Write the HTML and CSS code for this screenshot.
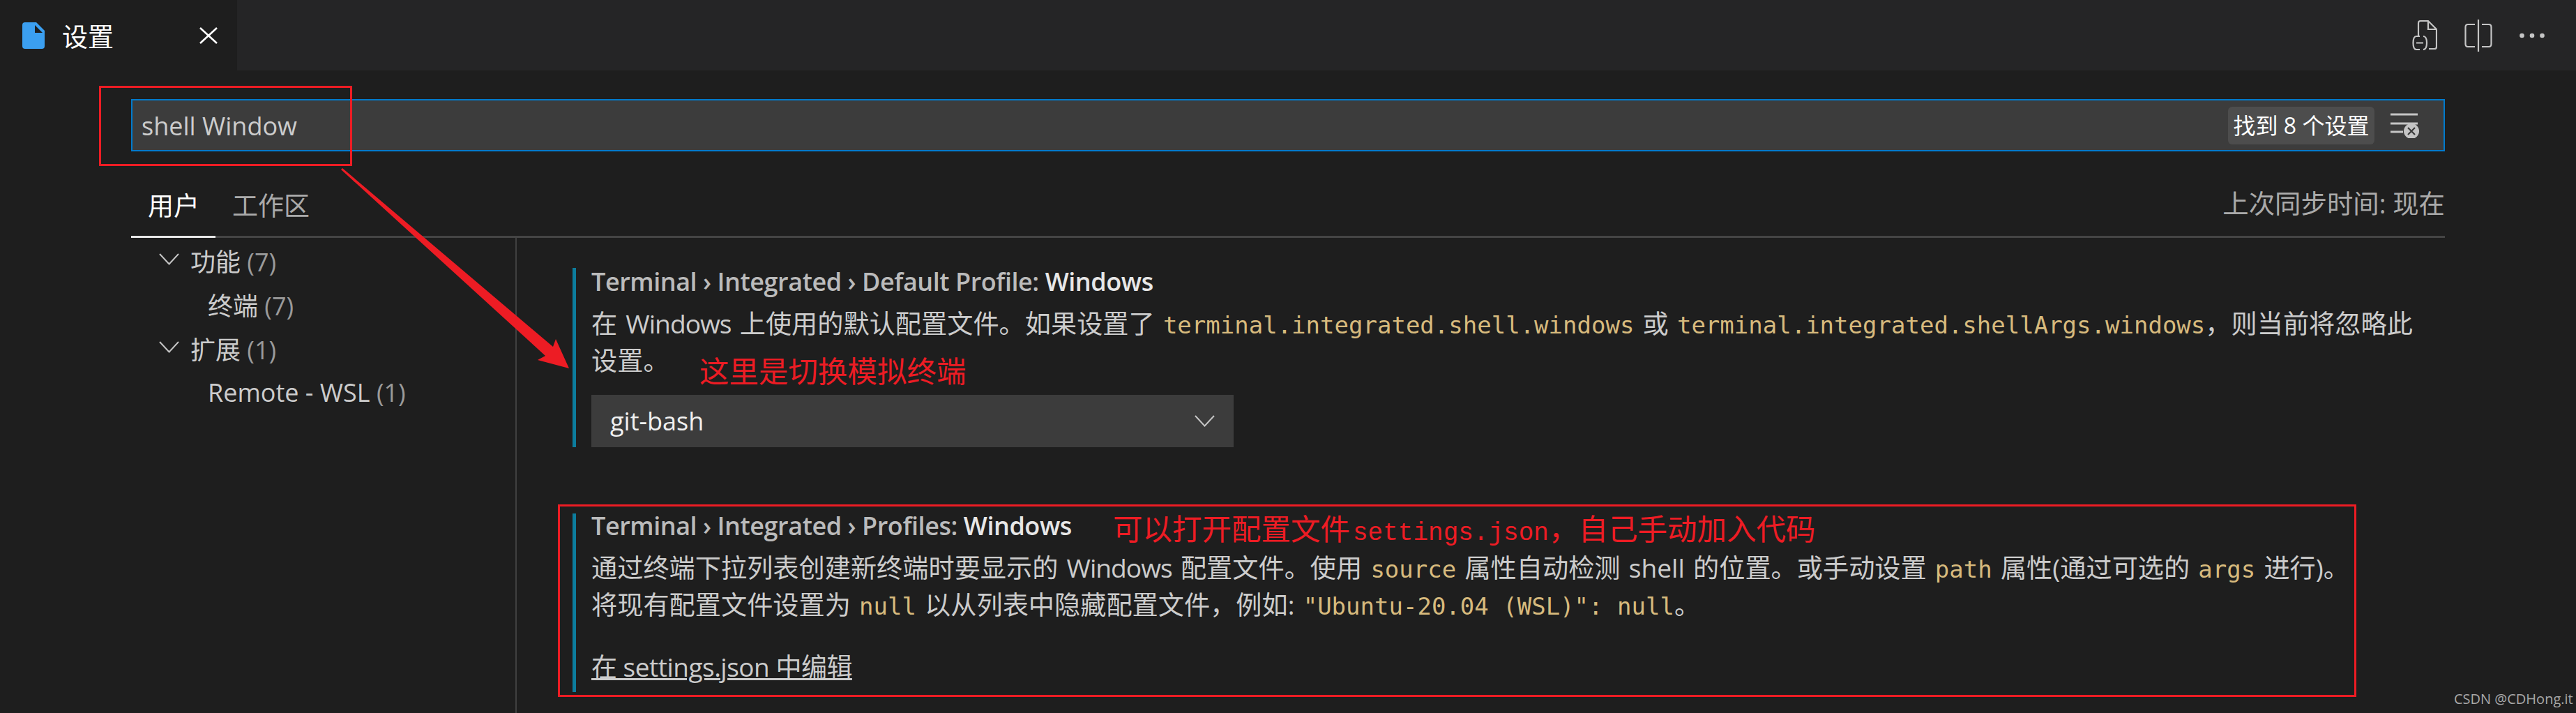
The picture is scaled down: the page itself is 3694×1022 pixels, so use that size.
FILE: index.html
```html
<!DOCTYPE html>
<html lang="zh-CN">
<head>
<meta charset="utf-8">
<title>设置</title>
<link rel="stylesheet" href="styles.css">
</head>
<body>
<div class="editor">
  <header class="tabbar">
    <div class="tab">
      <svg class="file-icon" viewBox="0 0 32 38"><path d="M4 0H20L32 12V34Q32 38 28 38H4Q0 38 0 34V4Q0 0 4 0Z" fill="#3b9ff0"/><path d="M18 4L29 15H18Z" fill="#1e1e1e"/></svg>
      <span class="tab-label">设置</span>
      <svg class="tab-close" viewBox="0 0 26 24"><path d="M1 1L25 23M25 1L1 23" stroke="#fff" stroke-width="2.6" fill="none"/></svg>
    </div>
    <div class="actions">
      <svg class="act-file" viewBox="0 0 36 46" fill="none" stroke="#c5c5c5" stroke-width="2.2"><path d="M9 24V5Q9 2 12 2H23L35 14V39Q35 42 32 42H24"/><path d="M23 2V14H35"/><path d="M11 24H6Q1.500 24 1.500 33.500T6 43H11M16 24Q21 24 21 33.500T16 43M6 33.500H16"/></svg>
      <svg class="act-split" viewBox="0 0 40 46" fill="none" stroke="#c5c5c5" stroke-width="2.2"><path d="M20 0V46"/><path d="M15 7H5Q1.500 7 1.500 11V35Q1.500 39 5 39H15M25 7H35Q38.500 7 38.500 11V35Q38.500 39 35 39H25"/></svg>
      <svg class="act-more" viewBox="0 0 36 8" fill="#c5c5c5"><circle cx="3.500" cy="4" r="3.300"/><circle cx="18" cy="4" r="3.300"/><circle cx="32.500" cy="4" r="3.300"/></svg>
    </div>
  </header>

  <div class="search">
    <span class="search-text">shell Window</span>
    <span class="badge">找到 8 个设置</span>
    <svg class="clear-icon" viewBox="0 0 41 36"><path d="M0 2H39M0 15H39M0 27H18" stroke="#c5c5c5" stroke-width="3" fill="none"/><ellipse cx="30" cy="26" rx="11" ry="11" fill="#c5c5c5"/><path d="M25 21L35 31M35 21L25 31" stroke="#3c3c3c" stroke-width="2.200" fill="none"/></svg>
  </div>

  <nav class="scopes">
    <span class="scope scope-active">用户</span>
    <span class="scope">工作区</span>
    <span class="sync">上次同步时间: 现在</span>
  </nav>

  <div class="body">
    <aside class="tree">
      <div class="row"><svg class="chev" viewBox="0 0 29 17"><path d="M1 1L14.500 15.500L28 1" fill="none" stroke="#c5c5c5" stroke-width="2"/></svg><span class="node">功能 <i class="count">(7)</i></span></div>
      <div class="row row-sub"><span class="node">终端 <i class="count">(7)</i></span></div>
      <div class="row"><svg class="chev" viewBox="0 0 29 17"><path d="M1 1L14.500 15.500L28 1" fill="none" stroke="#c5c5c5" stroke-width="2"/></svg><span class="node">扩展 <i class="count">(1)</i></span></div>
      <div class="row row-sub"><span class="node">Remote - WSL <i class="count">(1)</i></span></div>
    </aside>
    <main class="settings">
      <section class="setting setting-one">
        <h2 class="title">Terminal › Integrated › Default Profile: <b>Windows</b></h2>
        <div class="desc">
          <div class="line">在 <span class="word">Windows</span> 上使用的默认配置文件。如果设置了 <code>terminal.integrated.shell.windows</code> 或 <code>terminal.integrated.shellArgs.windows</code>，则当前将忽略此</div>
          <div class="line">设置。</div>
        </div>
        <div class="select"><span>git-bash</span><svg class="select-chev" viewBox="0 0 29 17"><path d="M1 1L14.500 15.500L28 1" fill="none" stroke="#c5c5c5" stroke-width="2"/></svg></div>
      </section>
      <section class="setting setting-two">
        <h2 class="title">Terminal › Integrated › Profiles: <b>Windows</b></h2>
        <div class="desc">
          <div class="line">通过终端下拉列表创建新终端时要显示的 <span class="word">Windows</span> 配置文件。使用 <code>source</code> 属性自动检测 shell 的位置。或手动设置 <code>path</code> 属性(通过可选的 <code>args</code> 进行)。</div>
          <div class="line">将现有配置文件设置为 <code>null</code> 以从列表中隐藏配置文件，例如: <code>"Ubuntu-20.04 (WSL)": null</code>。</div>
        </div>
        <a class="link">在 settings.json 中编辑</a>
      </section>
    </main>
  </div>

  <div class="mark mark-search"></div>
  <div class="mark mark-profiles"></div>
  <svg class="arrow" viewBox="0 0 3694 1022"><polygon points="489,243 491,241 793,497 797,486 816,528 771,516 782,510" fill="#ed1c24"/></svg>
  <span class="note note-one">这里是切换模拟终端</span>
  <span class="note note-two">可以打开配置文件<span class="note-mono">settings.json</span>，自己手动加入代码</span>
  <span class="watermark">CSDN @CDHong.it</span>
</div>
</body>
</html>
```
FILE: styles.css
```css
* { box-sizing: border-box; }
html, body { margin: 0; padding: 0; background: #1e1e1e; }
.editor {
  position: relative;
  width: 3694px;
  height: 1022px;
  overflow: hidden;
  display: flex;
  flex-direction: column;
  color: #cccccc;
  font-family: "Open Sans", "Noto Sans CJK SC", sans-serif;
  font-size: 36px;
}
.tabbar {
  flex: none;
  height: 101px;
  background: #252526;
  display: flex;
  justify-content: space-between;
}
.tab {
  width: 340px;
  background: #1e1e1e;
  display: flex;
  align-items: center;
  padding-left: 32px;
  color: #fff;
}
.file-icon { width: 32px; height: 38px; margin-right: 25px; }
.tab-label { font-size: 37px; width: 197px; }
.tab-close { width: 26px; height: 24px; }
.actions { display: flex; align-items: center; padding-right: 45px; }
.act-file { width: 36px; height: 46px; }
.act-split { width: 40px; height: 46px; margin-left: 39px; }
.act-more { width: 36px; height: 8px; margin-left: 39px; }
.search {
  flex: none;
  margin: 41px 0 0 188px;
  width: 3318px;
  height: 75px;
  background: #3c3c3c;
  border: 2px solid #007acc;
  display: flex;
  align-items: center;
  padding: 0 35px 0 13px;
}
.search-text { flex: 1; font-size: 36px; color: #cccccc; position: relative; top: 1px; }
.badge {
  width: 210px;
  height: 54px;
  background: #4d4d4d;
  border-radius: 6px;
  color: #fff;
  font-size: 32px;
  line-height: 54px;
  text-align: center;
  white-space: nowrap;
}
.clear-icon { width: 41px; height: 36px; margin-left: 23px; }
.scopes {
  flex: none;
  height: 124px;
  margin: 0 0 0 188px;
  width: 3318px;
  border-bottom: 3px solid #454545;
  display: flex;
  align-items: flex-end;
}
.scope {
  font-size: 37px;
  color: #aaaaaa;
  height: 74px;
  padding: 0 23px 0 24px;
  line-height: 56px;
  margin-bottom: -3px;
  border-bottom: 3px solid transparent;
}
.scope-active { color: #fff; border-bottom-color: #e7e7e7; }
.sync {
  margin-left: auto;
  height: 74px;
  line-height: 56px;
  font-size: 37.400px;
  color: #aaaaaa;
  white-space: nowrap;
}
.body { flex: 1; display: flex; min-height: 0; }
.tree {
  flex: none;
  width: 741px;
  padding: 1px 0 0 228px;
  border-right: 2px solid #404040;
  font-size: 36px;
}
.row { height: 63px; display: flex; align-items: center; white-space: nowrap; }
.row-sub { padding-left: 70px; }
.chev { width: 29px; height: 17px; margin-right: 16px; margin-top: -4px; }
.node { color: #cccccc; }
.count { font-style: normal; color: #9a9a9a; }
.settings { flex: 1; padding-left: 80px; }
.setting {
  border-left: 5px solid #0c7d9d;
  padding-left: 22px;
}
.setting-one { margin-top: 43px; height: 257px; }
.setting-two { margin-top: 95px; height: 256px; }
.title {
  margin: 0;
  font-size: 36px;
  font-weight: 600;
  letter-spacing: -0.450px;
  color: #bbbbbb;
  line-height: 40px;
  white-space: nowrap;
}
.title b { color: #e7e7e7; font-weight: 600; }
.setting-one .title { margin-bottom: 13px; }
.setting-two .title { line-height: 36px; margin-bottom: 15px; }
.desc { font-size: 37.200px; word-spacing: 2.500px; color: #cccccc; white-space: nowrap; }
.word { letter-spacing: -1px; }
.line { height: 53px; line-height: 53px; }
code {
  font-family: "DejaVu Sans Mono", monospace;
  font-size: 34px;
  line-height: 0;
  word-spacing: 0;
  color: #d7ba7d;
}
.select {
  margin-top: 23px;
  width: 921px;
  height: 75px;
  background: #3c3c3c;
  display: flex;
  align-items: center;
  justify-content: space-between;
  padding: 0 27px;
  color: #f0f0f0;
  font-size: 36px;
}
.select-chev { width: 29px; height: 17px; }
.link {
  display: block;
  margin-top: 42px;
  line-height: 42px;
  font-size: 37px;
  letter-spacing: -0.500px;
  color: #cccccc;
  text-decoration: underline;
  text-decoration-thickness: 3px;
  white-space: nowrap;
}
.mark { position: absolute; border: 3px solid #ed1c24; }
.mark-search { left: 142px; top: 123px; width: 363px; height: 115px; }
.mark-profiles { left: 800px; top: 723px; width: 2579px; height: 276px; }
.arrow { position: absolute; left: 0; top: 0; width: 3694px; height: 1022px; pointer-events: none; }
.note { position: absolute; color: #ed1c24; font-size: 42.500px; line-height: 50px; white-space: nowrap; }
.note-mono { font-family: "Liberation Mono", monospace; font-size: 36px; padding-left: 4px; }
.note-one { left: 1003px; top: 507px; }
.note-two { left: 1596px; top: 733px; }
.watermark { position: absolute; left: 3519px; top: 990px; font-size: 20px; line-height: 24px; color: #a8a8a8; white-space: nowrap; }
```
